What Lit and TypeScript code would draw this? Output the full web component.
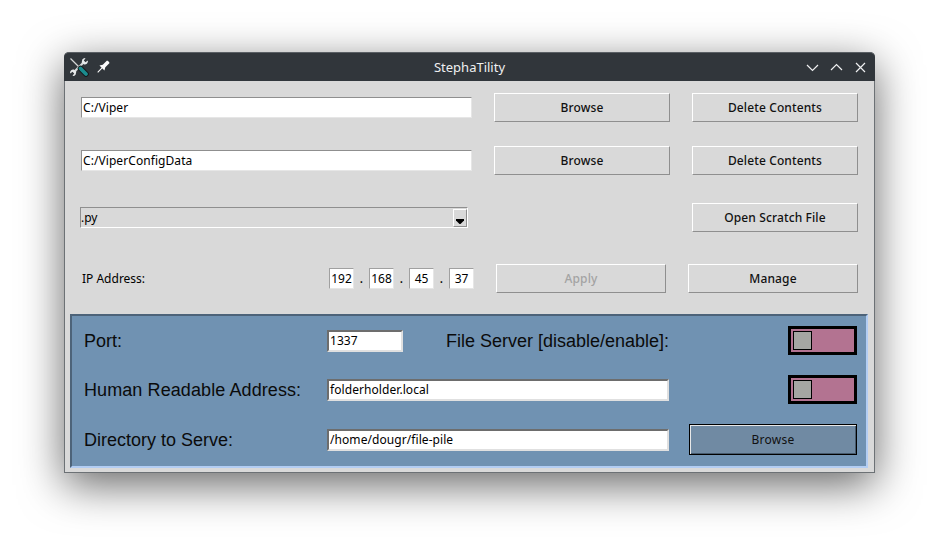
import { LitElement, html, css } from "lit";
import { customElement } from "lit/decorators.js";

@customElement("app-root")
export class AppRoot extends LitElement {
  static styles = css`
    :host {
      display: block;
      height: 549px;
      background: #fff;
      overflow: hidden;
      font-family: "Noto Sans", sans-serif;
      font-size: 12px;
      color: #000;
    }
    .window {
      box-sizing: border-box;
      width: 811px;
      height: 421px;
      margin: 52px 0 0 64px;
      background: #d9d9d9;
      border: 1px solid #6c7175;
      border-top: none;
      border-radius: 5px 5px 0 0;
      box-shadow: 0 12px 44px rgba(0, 0, 0, 0.6);
    }
    .titlebar {
      box-sizing: border-box;
      height: 29px;
      margin: 0 -1px;
      background: #31363b;
      border-top: 1px solid #5a5f64;
      border-radius: 5px 5px 0 0;
      display: flex;
      align-items: center;
      color: #eff0f1;
      font-size: 13px;
    }
    .tb-left {
      width: 70px;
      display: flex;
      align-items: center;
      gap: 7px;
      padding-left: 5px;
      box-sizing: border-box;
    }
    .title {
      flex: 1;
      text-align: center;
    }
    .tb-right {
      width: 70px;
      display: flex;
      justify-content: flex-end;
      gap: 9px;
      padding-right: 7px;
      box-sizing: border-box;
    }
    .content {
      padding: 12px 0 0 1px;
    }
    .row {
      display: flex;
      align-items: center;
      height: 29px;
      padding-left: 15px;
    }
    .row2 { margin-top: 24px; }
    .row3 { margin-top: 28px; padding-left: 14px; }
    .row4 { margin-top: 32px; padding-left: 16px; }
    .field {
      box-sizing: border-box;
      flex: none;
      background: #fff;
      height: 21px;
      line-height: 19px;
      padding-left: 1px;
      letter-spacing: 0.07px;
      border-top: 1px solid #8f8f8f;
      border-left: 1px solid #8f8f8f;
      border-right: 1px solid #e6e6e6;
      border-bottom: 1px solid #e6e6e6;
      white-space: nowrap;
    }
    .path { width: 391px; margin-right: 22px; }
    .btn {
      box-sizing: border-box;
      flex: none;
      height: 29px;
      line-height: 27px;
      text-align: center;
      font-weight: 500;
      letter-spacing: 0.12px;
      color: #111;
      background: #d9d9d9;
      border-top: 1px solid #fff;
      border-left: 1px solid #fff;
      border-right: 1px solid #8f8f8f;
      border-bottom: 1px solid #8f8f8f;
    }
    .browse { width: 176px; margin-right: 22px; }
    .wide { width: 166px; }
    .combo {
      box-sizing: border-box;
      flex: none;
      width: 388px;
      height: 21px;
      line-height: 19px;
      display: flex;
      justify-content: space-between;
      border-top: 1px solid #8f8f8f;
      border-left: 1px solid #8f8f8f;
      border-right: 1px solid #fff;
      border-bottom: 1px solid #fff;
      margin-right: 224px;
    }
    .arrow {
      box-sizing: border-box;
      width: 14px;
      margin-top: 1px;
      height: 18px;
      border-top: 1px solid #fff;
      border-left: 1px solid #fff;
      border-right: 1px solid #8f8f8f;
      border-bottom: 1px solid #8f8f8f;
      display: flex;
      justify-content: center;
      align-items: flex-end;
      padding-bottom: 2px;
    }
    .arrow svg { display: block; }
    .ip-label { width: 247px; flex: none; }
    .octet {
      width: 25px;
      padding: 0;
      text-align: center;
      letter-spacing: 0;
      border-top: 1px solid #a0a0a0;
      border-left: 1px solid #a0a0a0;
    }
    .dot { width: 15px; flex: none; text-align: center; font-weight: 500; }
    .apply { width: 170px; margin: 0 22px; color: #a3a3a3; }
    .manage { width: 170px; }
    .panel {
      box-sizing: border-box;
      width: 798px;
      height: 154px;
      margin: 21px 0 0 4px;
      background: #7092b2;
      border-top: 2px solid #4d6379;
      border-left: 2px solid #4d6379;
      border-right: 2px solid #b2cdf3;
      border-bottom: 2px solid #b2cdf3;
      padding: 10px 0 0 12px;
    }
    .prow {
      display: flex;
      align-items: center;
      height: 29px;
    }
    .prow + .prow { margin-top: 20px; }
    .prow.last { height: 31px; }
    .plabel,
    .fs-label {
      flex: none;
      padding-top: 2px;
      font-family: "Liberation Sans", Arial, sans-serif;
      font-size: 18px;
      color: #0b0b0b;
      box-sizing: border-box;
      white-space: nowrap;
    }
    .plabel { width: 243px; }
    .plabel.hra { letter-spacing: 0.09px; }
    .fs-label { width: 266px; padding-left: 43px; }
    .pfield {
      height: 22px;
      border-top: 2px solid #6d6d6d;
      border-left: 2px solid #6d6d6d;
      border-right: 2px solid #e0e0e0;
      border-bottom: 2px solid #e0e0e0;
      line-height: 18px;
      padding-left: 1px;
    }
    .port { width: 76px; }
    .server { width: 342px; }
    .switch {
      box-sizing: border-box;
      flex: none;
      width: 69px;
      height: 29px;
      margin-left: 119px;
      background: #b37391;
      border: 3px solid #000;
      padding: 2px;
    }
    .knob {
      box-sizing: border-box;
      width: 19px;
      height: 19px;
      background: #a5a6a2;
      border: 1px solid #000;
    }
    .pbrowse {
      box-sizing: border-box;
      flex: none;
      width: 168px;
      height: 31px;
      line-height: 29px;
      margin-left: 20px;
      text-align: center;
      letter-spacing: 0.25px;
      color: #111;
      background: #708aa3;
      border: 1px solid #000;
      box-shadow: inset 1px 1px 0 #e8e8e8, inset -1px -1px 0 #465a6d;
    }
  `;

  render() {
    return html`
      <div class="window">
        <div class="titlebar">
          <div class="tb-left">
            <svg width="20" height="20" viewBox="0 0 20 20">
              <path d="M1.500 1.500 L11 11" stroke="#d5d7d8" stroke-width="1.300" fill="none"/>
              <path d="M4.500 15.500 L15.500 4.500" stroke="#d8dadb" stroke-width="2.200" fill="none"/>
              <path d="M13.300 2.600 A3.300 3.300 0 0 1 16.500 1.100 L14.800 3.700 L16.300 5.200 L18.900 3.500 A3.300 3.300 0 0 1 15.200 7.400 L12.700 5.500z" fill="#e8eaeb"/>
              <path d="M6.700 17.400 A3.300 3.300 0 0 1 3.500 18.900 L5.200 16.300 L3.700 14.800 L1.100 16.500 A3.300 3.300 0 0 1 4.800 12.600 L7.300 14.500z" fill="#e8eaeb"/>
              <path d="M11.500 11.500 L17 17" stroke="#14181a" stroke-width="5.500" stroke-linecap="round"/>
              <path d="M11.500 11.500 L17 17" stroke="#1b8c8f" stroke-width="3.800" stroke-linecap="round"/>
            </svg>
            <svg width="14" height="14" viewBox="0 0 14 14">
              <g transform="rotate(45 7 7)">
                <path d="M5.200 -0.500 Q7 -1.500 8.800 -0.500 V5.500 L10.500 8.500 H3.500 L5.200 5.500z" fill="#fcfcfc"/>
                <path d="M7 8 V14.500" stroke="#fcfcfc" stroke-width="1.100"/>
              </g>
            </svg>
          </div>
          <div class="title">StephaTility</div>
          <div class="tb-right">
            <svg width="15" height="15" viewBox="0 0 15 15"><path d="M2 5 L7.500 10.500 L13 5" stroke="#eff0f1" stroke-width="1.200" fill="none"/></svg>
            <svg width="15" height="15" viewBox="0 0 15 15"><path d="M2 10 L7.500 4.500 L13 10" stroke="#eff0f1" stroke-width="1.200" fill="none"/></svg>
            <svg width="15" height="15" viewBox="0 0 15 15"><path d="M3 3 L12 12 M12 3 L3 12" stroke="#eff0f1" stroke-width="1.200" fill="none"/></svg>
          </div>
        </div>
        <div class="content">
          <div class="row">
            <div class="field path">C:/Viper</div>
            <div class="btn browse">Browse</div>
            <div class="btn wide">Delete Contents</div>
          </div>
          <div class="row row2">
            <div class="field path">C:/ViperConfigData</div>
            <div class="btn browse">Browse</div>
            <div class="btn wide">Delete Contents</div>
          </div>
          <div class="row row3">
            <div class="combo">
              <span>.py</span>
              <span class="arrow"><svg width="8" height="5" viewBox="0 0 8 5"><path d="M0 0H8V1.500L4.500 5H3.500L0 1.500z" fill="#000"/></svg></span>
            </div>
            <div class="btn wide">Open Scratch File</div>
          </div>
          <div class="row row4">
            <div class="ip-label">IP Address:</div>
            <div class="field octet">192</div>
            <div class="dot">.</div>
            <div class="field octet">168</div>
            <div class="dot">.</div>
            <div class="field octet">45</div>
            <div class="dot">.</div>
            <div class="field octet">37</div>
            <div class="btn apply">Apply</div>
            <div class="btn manage">Manage</div>
          </div>
          <div class="panel">
            <div class="prow">
              <div class="plabel">Port:</div>
              <div class="field pfield port">1337</div>
              <div class="fs-label">File Server [disable/enable]:</div>
              <div class="switch"><div class="knob"></div></div>
            </div>
            <div class="prow">
              <div class="plabel hra">Human Readable Address:</div>
              <div class="field pfield server">folderholder.local</div>
              <div class="switch"><div class="knob"></div></div>
            </div>
            <div class="prow last">
              <div class="plabel">Directory to Serve:</div>
              <div class="field pfield server">/home/dougr/file-pile</div>
              <div class="pbrowse">Browse</div>
            </div>
          </div>
        </div>
      </div>
    `;
  }
}
